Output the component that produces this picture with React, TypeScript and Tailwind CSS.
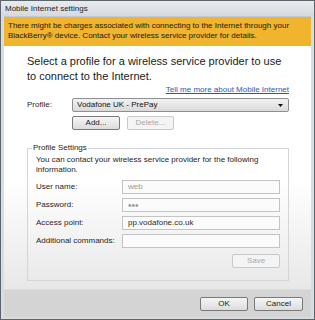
import React from "react";

const F = { fontFamily: '"Liberation Sans", Arial, sans-serif' };

function Btn({ children, disabled, w }: { children: React.ReactNode; disabled?: boolean; w: string }) {
  return (
    <div
      className={
        "h-[14px] flex items-center justify-center rounded-[2px] border text-[8px] " +
        w +
        " " +
        (disabled
          ? "border-[#c9c9c9] bg-[#f4f4f4] text-[#a8a8a8]"
          : "border-[#7a7a7a] bg-linear-to-b from-[#f6f6f6] to-[#dcdcdc] text-[#1a1a1a]")
      }
    >
      {children}
    </div>
  );
}

function Field({ label, value, muted, big }: { label: string; value: string; muted?: boolean; big?: boolean }) {
  return (
    <div className="flex items-center h-[14px]">
      <div className="w-[86px] text-[8px] text-[#1e1e1e]">{label}</div>
      <div
        className={
          "flex-1 h-[14px] border border-[#c3c3c3] bg-[#fbfbfb] flex items-center pl-[5px] " +
          (big ? "text-[10px] " : "text-[8px] ") +
          (muted ? "text-[#9a9a9a]" : "text-[#2a2a2a]")
        }
      >
        {value}
      </div>
    </div>
  );
}

export default function App() {
  return (
    <div style={F} className="w-[315px] h-[320px] bg-[#d9dde2] border border-[#5d636b] flex flex-col overflow-hidden">
      <div className="h-[15px] flex items-center pl-[4px] text-[8px] text-[#222] bg-linear-to-b from-[#e8ebee] to-[#d6dadf]">
        Mobile Internet settings
      </div>
      <div className="flex-1 mx-[3px] mb-[2px] flex flex-col border-t border-[#c4c9cf]">
        <div className="h-[29px] bg-[#f0b42e] pl-[4px] pt-[4px] text-[8px] leading-[10px] text-[#1a1a1a]">
          <div>There might be charges associated with connecting to the Internet through your</div>
          <div>BlackBerry® device. Contact your wireless service provider for details.</div>
        </div>
        <div className="flex-1 bg-linear-to-b from-white from-55% to-[#e8e8e8] pl-[23px] pr-[22px] pt-[8px]">
          <div className="text-[11px] leading-[15px] text-[#1a1a1a]">
            Select a profile for a wireless service provider to use
            <br />
            to connect to the Internet.
          </div>
          <div className="flex justify-end text-[8px] leading-[11px] mt-[0px]">
            <span className="text-[#1f5bb8] underline">Tell me more about Mobile Internet</span>
          </div>
          <div className="flex items-center mt-[3px]">
            <div className="w-[45px] text-[8px] text-[#1e1e1e]">Profile:</div>
            <div className="flex-1 h-[14px] rounded-[2px] border border-[#8d8f92] bg-linear-to-b from-[#f2f2f2] to-[#dadada] flex items-center justify-between pl-[4px] pr-[5px] text-[8px] text-[#111]">
              <span>Vodafone UK - PrePay</span>
              <svg width="5" height="3" viewBox="0 0 5 3">
                <path d="M0 0 L5 0 L2.5 3 Z" fill="#111" />
              </svg>
            </div>
          </div>
          <div className="flex gap-[7px] ml-[45px] mt-[4px]">
            <Btn w="w-[48px]">Add...</Btn>
            <Btn w="w-[47px]" disabled>Delete...</Btn>
          </div>
          <fieldset className="mt-[13px] border border-[#d2d6da] pl-[8px] pr-[8px] pb-[12px]">
            <legend className="ml-[-4px] px-[1px] text-[8px] leading-[10px] text-[#1e1e1e]">Profile Settings</legend>
            <div className="text-[8px] leading-[10px] text-[#1e1e1e] mt-[2px]">
              You can contact your wireless service provider for the following
              <br />
              information.
            </div>
            <div className="flex flex-col gap-[4px] mt-[5px]">
              <Field label="User name:" value="web" muted />
              <Field label="Password:" value="•••" muted big />
              <Field label="Access point:" value="pp.vodafone.co.uk" />
              <Field label="Additional commands:" value="" />
            </div>
            <div className="flex justify-end mt-[6px]">
              <Btn w="w-[48px]" disabled>Save</Btn>
            </div>
          </fieldset>
        </div>
        <div className="h-[28px] bg-[#d4d4d4] border-t border-[#dcdcdc] flex items-center justify-end gap-[6px] pr-[8px]">
          <Btn w="w-[48px]">OK</Btn>
          <Btn w="w-[49px]">Cancel</Btn>
        </div>
      </div>
    </div>
  );
}
